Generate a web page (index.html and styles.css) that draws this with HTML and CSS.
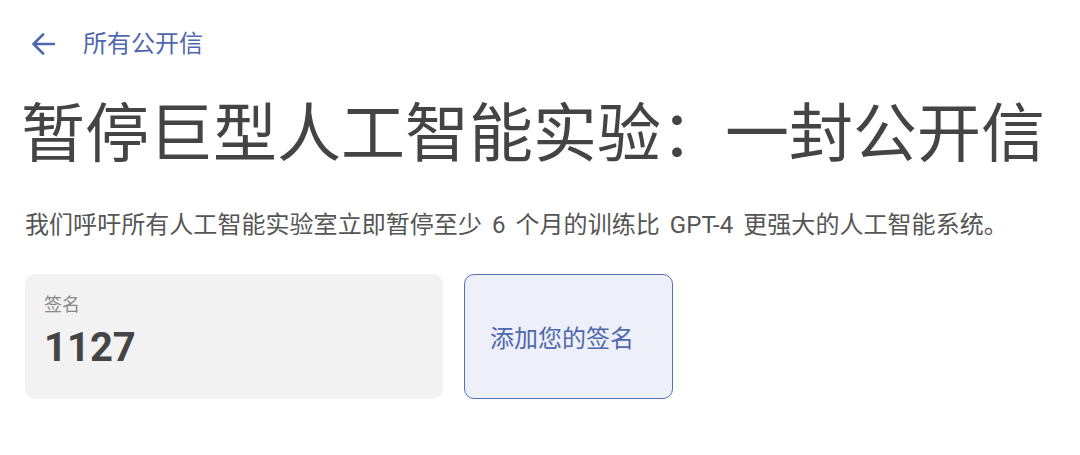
FILE: index.html
```html
<!DOCTYPE html>
<html lang="zh-CN">
<head>
<meta charset="utf-8">
<link rel="stylesheet" href="styles.css">
</head>
<body>
<div class="page">
  <a class="back" href="#">
    <svg class="back-icon" width="24" height="24" viewBox="0 0 24 24" aria-hidden="true">
      <path d="M23 12H2.5M12 2.5L2.5 12L12 21.5" fill="none" stroke="#4d68b0" stroke-width="2.6" stroke-linecap="round" stroke-linejoin="round"/>
    </svg>
    <span class="back-text">所有公开信</span>
  </a>
  <h1 class="title">暂停巨型人工智能实验：一封公开信</h1>
  <p class="lead">我们呼吁所有人工智能实验室立即暂停至少 6 个月的训练比 GPT-4 更强大的人工智能系统。</p>
  <div class="row">
    <div class="stat">
      <div class="stat-label">签名</div>
      <div class="stat-value">1127</div>
    </div>
    <button class="sign">添加您的签名</button>
  </div>
</div>
</body>
</html>
```

FILE: styles.css
```css
* { box-sizing: border-box; }
html, body { margin: 0; padding: 0; background: #ffffff; }
body {
  font-family: Roboto, "Noto Sans CJK SC", "Noto Sans", sans-serif;
  color: #444444;
}
.page {
  padding: 31px 0 0 25px;
}
.back {
  display: flex;
  align-items: center;
  gap: 28px;
  text-decoration: none;
  height: 26px;
  padding-left: 6px;
}
.back-icon { display: block; flex: none; }
.back-text {
  font-size: 24px;
  color: #4f67ad;
  line-height: 26px;
}
.title {
  margin: 38px 0 0 -4px;
  font-size: 64px;
  font-weight: 400;
  line-height: 80px;
  color: #444444;
  letter-spacing: 0;
}
.lead {
  margin: 34px 0 0 0;
  font-size: 24px;
  line-height: 32px;
  color: #555555;
  word-spacing: 4px;
  letter-spacing: 0.05px;
}
.row {
  display: flex;
  gap: 21px;
  margin-top: 33px;
}
.stat {
  width: 418px;
  height: 125px;
  background: #f2f2f2;
  border-radius: 10px;
  padding: 20px 0 0 19px;
}
.stat-label {
  font-size: 18px;
  line-height: 22px;
  color: #8a8a8a;
}
.stat-value {
  margin-top: 8px;
  font-size: 40px;
  font-weight: 700;
  line-height: 48px;
  color: #444444;
}
.sign {
  width: 209px;
  height: 125px;
  background: #edf0f8;
  border: 1.6px solid #5670b6;
  border-radius: 10px;
  font-family: Roboto, "Noto Sans CJK SC", sans-serif;
  font-size: 24px;
  color: #4f67ad;
  text-align: left;
  padding: 0 0 0 25px;
  cursor: pointer;
}
```
